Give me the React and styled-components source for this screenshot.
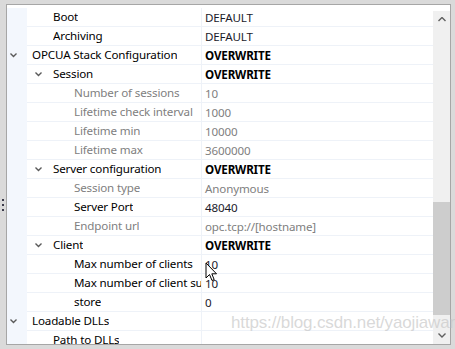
import React from 'react'
import styled, { createGlobalStyle } from 'styled-components'

const rows = [
    { name: 'Boot', level: 1, value: 'DEFAULT' },
    { name: 'Archiving', level: 1, value: 'DEFAULT' },
    { name: 'OPCUA Stack Configuration', level: 0, open: true, value: 'OVERWRITE', bold: true },
    { name: 'Session', level: 1, open: true, value: 'OVERWRITE', bold: true },
    { name: 'Number of sessions', level: 2, value: '10', muted: true },
    { name: 'Lifetime check interval', level: 2, value: '1000', muted: true },
    { name: 'Lifetime min', level: 2, value: '10000', muted: true },
    { name: 'Lifetime max', level: 2, value: '3600000', muted: true },
    { name: 'Server configuration', level: 1, open: true, value: 'OVERWRITE', bold: true },
    { name: 'Session type', level: 2, value: 'Anonymous', muted: true },
    { name: 'Server Port', level: 2, value: '48040' },
    { name: 'Endpoint url', level: 2, value: 'opc.tcp://[hostname]', muted: true },
    { name: 'Client', level: 1, open: true, value: 'OVERWRITE', bold: true },
    { name: 'Max number of clients', level: 2, value: '10' },
    { name: 'Max number of client subscriptions', level: 2, value: '10' },
    { name: 'store', level: 2, value: '0' },
    { name: 'Loadable DLLs', level: 0, open: true, value: '' },
    { name: 'Path to DLLs', level: 1, value: '' },
]

function Chevron({ up, down }) {
    const arrow = up || down
    const points = up ? '0.5,4 4,0.5 7.5,4' : down ? '0.5,0.5 4,4 7.5,0.5' : '0.5,0.5 3.5,3.5 6.5,0.5'
    return (
        <svg width={arrow ? 8 : 7} height="5" viewBox={arrow ? '0 0 8 5' : '0 0 7 5'}>
            <polyline points={points} fill="none" stroke={arrow ? '#606060' : '#5a5a5a'} strokeWidth="1.4" />
        </svg>
    )
}

function App() {
    return (
        <>
            <GlobalStyle />
            <Page>
                <Sash>
                    <Dot />
                    <Dot />
                    <Dot />
                </Sash>
                <Frame>
                    <Tree>
                        {rows.map((r) => (
                            <Row key={r.name}>
                                <Gutter>{r.level === 0 && r.open && <Chevron />}</Gutter>
                                <NameCell $level={r.level} $toggle={r.open && r.level > 0} $muted={r.muted}>
                                    {r.open && r.level > 0 && (
                                        <Toggle>
                                            <Chevron />
                                        </Toggle>
                                    )}
                                    <Label>{r.name}</Label>
                                </NameCell>
                                <ValueCell $muted={r.muted} $bold={r.bold}>{r.value}</ValueCell>
                            </Row>
                        ))}
                    </Tree>
                    <ScrollBar>
                        <ArrowButton>
                            <Chevron up />
                        </ArrowButton>
                        <Track>
                            <Thumb />
                        </Track>
                        <ArrowButton>
                            <Chevron down />
                        </ArrowButton>
                    </ScrollBar>
                </Frame>
                <Cursor width="13" height="21" viewBox="0 0 13 21">
                    <path d="M1 1 L1 16 L4.5 12.5 L7 18.5 L9.2 17.6 L6.8 11.8 L11.5 11.8 Z" fill="#fff" stroke="#000" strokeWidth="1" strokeLinejoin="round" />
                </Cursor>
                <Watermark>https://blog.csdn.net/yaojiawan</Watermark>
            </Page>
        </>
    )
}

export default App

const GlobalStyle = createGlobalStyle`
    html, body {
        margin: 0;
        padding: 0;
        background: #dadada;
    }
    body {
        font-family: "Noto Sans", "Open Sans", sans-serif;
        font-size: 11.6px;
        letter-spacing: -0.15px;
    }
`

const Page = styled.div`
    position: relative;
    width: 455px;
    height: 349px;
    box-sizing: border-box;
    padding: 4px 4px 4px 6px;
    background: #dadada;
    overflow: hidden;
`

const Sash = styled.div`
    position: absolute;
    left: 2px;
    top: 199px;
    display: flex;
    flex-direction: column;
    gap: 3px;
`

const Dot = styled.div`
    width: 2px;
    height: 2px;
    background: #3a3a4a;
`

const Frame = styled.div`
    height: 341px;
    box-sizing: border-box;
    border: 1px solid #a6a6a6;
    background: #fff;
    display: flex;
    overflow: hidden;
`

const Tree = styled.div`
    flex: 1;
    padding-top: 3px;
    display: flex;
    flex-direction: column;
`

const Row = styled.div`
    display: flex;
    height: 19px;
    flex-shrink: 0;
`

const Gutter = styled.div`
    width: 20px;
    flex-shrink: 0;
    background: #f3f7fd;
    display: flex;
    align-items: center;
    padding-left: 3px;
    box-sizing: border-box;
`

const NameCell = styled.div`
    width: 175px;
    flex-shrink: 0;
    box-sizing: border-box;
    display: flex;
    align-items: center;
    border-bottom: 1px solid #eef2f8;
    border-right: 1px solid #eef2f8;
    padding-left: ${(p) => 5 + 21 * p.$level - (p.$toggle ? 26 : 0)}px;
    color: ${(p) => (p.$muted ? '#808080' : '#000')};
    overflow: hidden;
    white-space: nowrap;
`

const Toggle = styled.div`
    width: 26px;
    flex-shrink: 0;
    display: flex;
    align-items: center;
    padding-left: 8px;
    box-sizing: border-box;
`

const Label = styled.span`
    line-height: 18px;
    overflow: hidden;
`

const ValueCell = styled.div`
    flex: 1;
    display: flex;
    align-items: center;
    padding-left: 3px;
    border-bottom: 1px solid #eef2f8;
    white-space: nowrap;
    color: ${(p) => (p.$muted ? '#808080' : '#1a1a2a')};
    font-weight: ${(p) => (p.$bold ? 700 : 400)};
    ${(p) => p.$bold && 'color: #000;'}
`

const ScrollBar = styled.div`
    width: 17px;
    flex-shrink: 0;
    margin-top: 6px;
    background: #f0f0f0;
    display: flex;
    flex-direction: column;
`

const ArrowButton = styled.div`
    height: 17px;
    flex-shrink: 0;
    display: flex;
    align-items: center;
    justify-content: center;
`

const Track = styled.div`
    flex: 1;
    display: flex;
    flex-direction: column;
`

const Thumb = styled.div`
    margin-top: 174px;
    height: 113px;
    background: #cdcdcd;
`

const Cursor = styled.svg`
    position: absolute;
    left: 205px;
    top: 262px;
`

const Watermark = styled.div`
    position: absolute;
    left: 231px;
    top: 313px;
    font-family: "Liberation Sans", Arial, sans-serif;
    font-size: 17px;
    color: rgba(200, 200, 200, 0.7);
    white-space: nowrap;
    pointer-events: none;
`
